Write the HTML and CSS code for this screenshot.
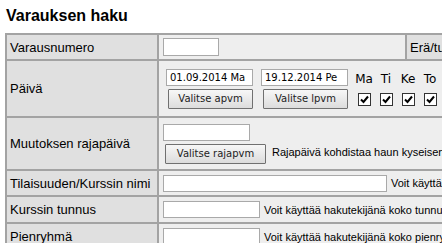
FILE: index.html
```html
<!DOCTYPE html>
<html lang="fi">
<head>
    <meta charset="UTF-8">
    <meta name="viewport" content="width=device-width, initial-scale=1.0">
    <title>Varauksen haku</title>
    <link rel="stylesheet" href="styles.css">
</head>
<body>
    <h1 class="page-title">Varauksen haku</h1>

    <table class="search-table">
        <tr class="row-1">
            <td class="label col-a">Varausnumero</td>
            <td class="field col-b"><input type="text" class="txt txt-num"></td>
            <td class="label col-c">Erä/tunnus</td>
            <td class="field col-d"><input type="text" class="txt txt-num"></td>
        </tr>
        <tr class="row-2">
            <td class="label">Päivä</td>
            <td class="field" colspan="3">
                <div class="date-line">
                    <div class="date-pick">
                        <input type="text" class="txt txt-date" value="01.09.2014 Ma">
                        <button type="button" class="btn btn-date">Valitse apvm</button>
                    </div>
                    <div class="date-pick">
                        <input type="text" class="txt txt-date" value="19.12.2014 Pe">
                        <button type="button" class="btn btn-date">Valitse lpvm</button>
                    </div>
                    <!-- viikonpäivät -->
                    <div class="days">
                        <div class="day"><span class="day-name">Ma</span><span class="check"><svg width="13" height="13" viewBox="0 0 13 13"><rect x="0.5" y="0.5" width="12" height="12" fill="#fff" stroke="#333"/><path d="M3 6.5 L5.5 9 L10 3.5" fill="none" stroke="#000" stroke-width="2"/></svg></span></div>
                        <div class="day"><span class="day-name">Ti</span><span class="check"><svg width="13" height="13" viewBox="0 0 13 13"><rect x="0.5" y="0.5" width="12" height="12" fill="#fff" stroke="#333"/><path d="M3 6.5 L5.5 9 L10 3.5" fill="none" stroke="#000" stroke-width="2"/></svg></span></div>
                        <div class="day"><span class="day-name">Ke</span><span class="check"><svg width="13" height="13" viewBox="0 0 13 13"><rect x="0.5" y="0.5" width="12" height="12" fill="#fff" stroke="#333"/><path d="M3 6.5 L5.5 9 L10 3.5" fill="none" stroke="#000" stroke-width="2"/></svg></span></div>
                        <div class="day"><span class="day-name">To</span><span class="check"><svg width="13" height="13" viewBox="0 0 13 13"><rect x="0.5" y="0.5" width="12" height="12" fill="#fff" stroke="#333"/><path d="M3 6.5 L5.5 9 L10 3.5" fill="none" stroke="#000" stroke-width="2"/></svg></span></div>
                        <div class="day"><span class="day-name">Pe</span><span class="check"><svg width="13" height="13" viewBox="0 0 13 13"><rect x="0.5" y="0.5" width="12" height="12" fill="#fff" stroke="#333"/><path d="M3 6.5 L5.5 9 L10 3.5" fill="none" stroke="#000" stroke-width="2"/></svg></span></div>
                    </div>
                </div>
            </td>
        </tr>
        <tr class="row-3">
            <td class="label">Muutoksen rajapäivä</td>
            <td class="field" colspan="3">
                <div class="limit-box">
                    <input type="text" class="txt txt-date">
                    <div class="limit-line">
                        <button type="button" class="btn btn-limit">Valitse rajapvm</button>
                        <span class="hint">Rajapäivä kohdistaa haun kyseisen päivän jälkeen muuttuneisiin varauksiin.</span>
                    </div>
                </div>
            </td>
        </tr>
        <tr class="row-4">
            <td class="label">Tilaisuuden/Kurssin nimi</td>
            <td class="field" colspan="3">
                <div class="with-hint">
                    <input type="text" class="txt txt-long">
                    <span class="hint">Voit käyttää hakutekijänä koko nimeä tai sen osaa.</span>
                </div>
            </td>
        </tr>
        <tr class="row-5">
            <td class="label">Kurssin tunnus</td>
            <td class="field" colspan="3">
                <div class="with-hint">
                    <input type="text" class="txt txt-mid">
                    <span class="hint">Voit käyttää hakutekijänä koko tunnusta tai sen osaa.</span>
                </div>
            </td>
        </tr>
        <tr class="row-5">
            <td class="label">Pienryhmä</td>
            <td class="field" colspan="3">
                <div class="with-hint">
                    <input type="text" class="txt txt-mid">
                    <span class="hint">Voit käyttää hakutekijänä koko pienryhmän nimeä tai sen osaa.</span>
                </div>
            </td>
        </tr>
    </table>
</body>
</html>
```

FILE: styles.css
```css
html, body {
    overflow: hidden;
}
body {
    font-family: "Liberation Sans", Arial, sans-serif;
    font-size: 13px;
    color: #000;
    background-color: #fff;
    margin: 0;
    padding: 5px;
}
.page-title {
    font-size: 16px;
    font-weight: bold;
    line-height: 18px;
    margin: 2px 0 8px 1px;
}
.search-table {
    table-layout: fixed;
    width: 760px;
    border-collapse: separate;
    border-spacing: 0;
    border-top: 2px solid #a3a3a3;
    border-left: 2px solid #a3a3a3;
}
.search-table td {
    box-sizing: border-box;
    border-right: 2px solid #a3a3a3;
    border-bottom: 2px solid #a3a3a3;
    vertical-align: middle;
    white-space: nowrap;
    padding: 0 4px;
}
.col-a { width: 152px; }
.col-b { width: 248px; }
.col-c { width: 130px; }
.label {
    background-color: #e0e0e0;
    padding-left: 3px !important;
}
.field {
    background-color: #eeeeee;
}
.row-1 { height: 26px; }
.row-2 { height: 57px; }
.row-3 { height: 53px; }
.row-4 { height: 26px; }
.row-5 { height: 27px; }

/* kentät */
.txt {
    box-sizing: border-box;
    display: block;
    height: 17px;
    margin: 0;
    padding: 0 3px;
    border: 1px solid #a9a9a9;
    background: #fff;
    font-family: "DejaVu Sans", Verdana, sans-serif;
    font-size: 10px;
    color: #000;
}
.txt-num { width: 56px; height: 18px; }
.txt-date { width: 87px; }
.txt-long { width: 224px; }
.txt-mid { width: 97px; }

.btn {
    box-sizing: border-box;
    height: 20px;
    margin: 3px 0 0 2px;
    padding: 0;
    border: 1px solid #707070;
    border-radius: 1px;
    background: linear-gradient(#f7f7f7, #dcdcdc);
    font-family: "DejaVu Sans", Verdana, sans-serif;
    font-size: 10px;
    color: #222;
}
.btn-date { width: 85px; }
.btn-limit { width: 101px; }

.date-line {
    display: flex;
    align-items: center;
    margin-left: 3px;
}
.date-pick {
    display: flex;
    flex-direction: column;
    align-items: flex-start;
    margin-right: 8px;
}
.days {
    display: flex;
    margin-left: -3px;
}
.day {
    width: 22px;
    display: flex;
    flex-direction: column;
    align-items: center;
}
.day-name {
    font-family: "DejaVu Sans", Verdana, sans-serif;
    font-size: 12px;
    line-height: 14px;
    margin-bottom: 7px;
}
.check {
    display: block;
    height: 13px;
}
.check svg {
    display: block;
}

.hint {
    font-size: 11px;
}
.limit-line {
    display: flex;
    align-items: center;
}
.limit-line .hint {
    margin-left: 6px;
}
.with-hint {
    display: flex;
    align-items: center;
}
.with-hint .hint {
    margin-left: 4px;
}
```
